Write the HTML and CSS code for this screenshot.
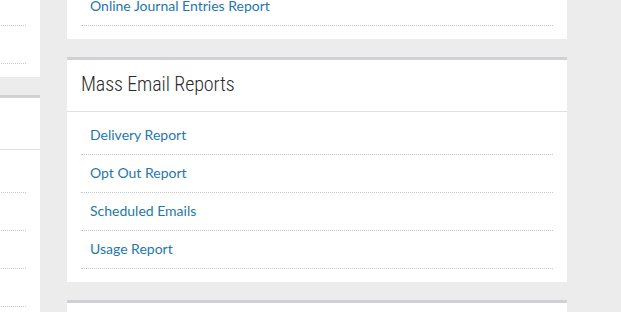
FILE: index.html
```html
<!DOCTYPE html>
<html>

<head>
    <title>Reports</title>
    <meta name="viewport" content="width=device-width, initial-scale=1">
    <link rel="stylesheet" href="styles.css">
</head>

<body>
    <div class="columns">
        <div class="column">
            <div class="panel">
                <h3 class="panel-title">Accounting Reports</h3>
                <ul class="report-list">
                    <li><a href="#">Account Balances</a></li>
                    <li><a href="#">Invoice Report</a></li>
                    <li><a href="#">Payment Report</a></li>
                </ul>
            </div>
            <div class="panel">
                <h3 class="panel-title">Member Reports</h3>
                <ul class="report-list">
                    <li><a href="#">Member Directory</a></li>
                    <li><a href="#">New Members</a></li>
                    <li><a href="#">Renewals</a></li>
                    <li><a href="#">Lapsed Members</a></li>
                </ul>
            </div>
        </div>

        <div class="column">
            <div class="panel">
                <h3 class="panel-title">Journal Reports</h3>
                <ul class="report-list">
                    <li><a href="#">Journal Entries Report</a></li>
                    <li><a href="#">Online Journal Entries Report</a></li>
                </ul>
            </div>
            <div class="panel">
                <h3 class="panel-title">Mass Email Reports</h3>
                <ul class="report-list">
                    <li><a href="#">Delivery Report</a></li>
                    <li><a href="#">Opt Out Report</a></li>
                    <li><a href="#">Scheduled Emails</a></li>
                    <li><a href="#">Usage Report</a></li>
                </ul>
            </div>
            <div class="panel">
                <h3 class="panel-title">Event Reports</h3>
                <ul class="report-list">
                    <li><a href="#">Registrations</a></li>
                </ul>
            </div>
        </div>
    </div>
</body>

</html>
```

FILE: styles.css
```css
body {
    margin: 0;
    padding: 0;
    background-color: #ececec;
    font-family: Lato, "Open Sans", sans-serif;
    overflow: hidden;
}

/* two report columns, scrolled part way */
.columns {
    display: grid;
    grid-template-columns: 500px 500px;
    column-gap: 27px;
    margin: -110px 0 0 -460px;
}

.column {
    display: flex;
    flex-direction: column;
    gap: 18px;
}

.panel {
    background-color: #fff;
    border-top: 3px solid #d1d1d5;
}

.panel-title {
    margin: 0;
    height: 52px;
    padding: 0 14px 3px;
    box-sizing: border-box;
    display: flex;
    align-items: center;
    border-bottom: 1px solid #e0e0e0;
    font-family: "Roboto Condensed", "Open Sans Condensed", Lato, sans-serif;
    font-size: 20px;
    font-weight: 300;
    letter-spacing: -0.1px;
    color: #2b2b2b;
}

.report-list {
    list-style: none;
    margin: 0;
    padding: 5px 14px 13px;
}

.report-list li {
    height: 38px;
    box-sizing: border-box;
    display: flex;
    align-items: center;
    padding: 0 0 3px 9px;
    border-bottom: 1px dotted #c8c8c8;
}

.report-list a {
    color: #1f77ab;
    font-size: 14px;
    text-decoration: none;
}

.report-list a:hover {
    text-decoration: underline;
}
```
